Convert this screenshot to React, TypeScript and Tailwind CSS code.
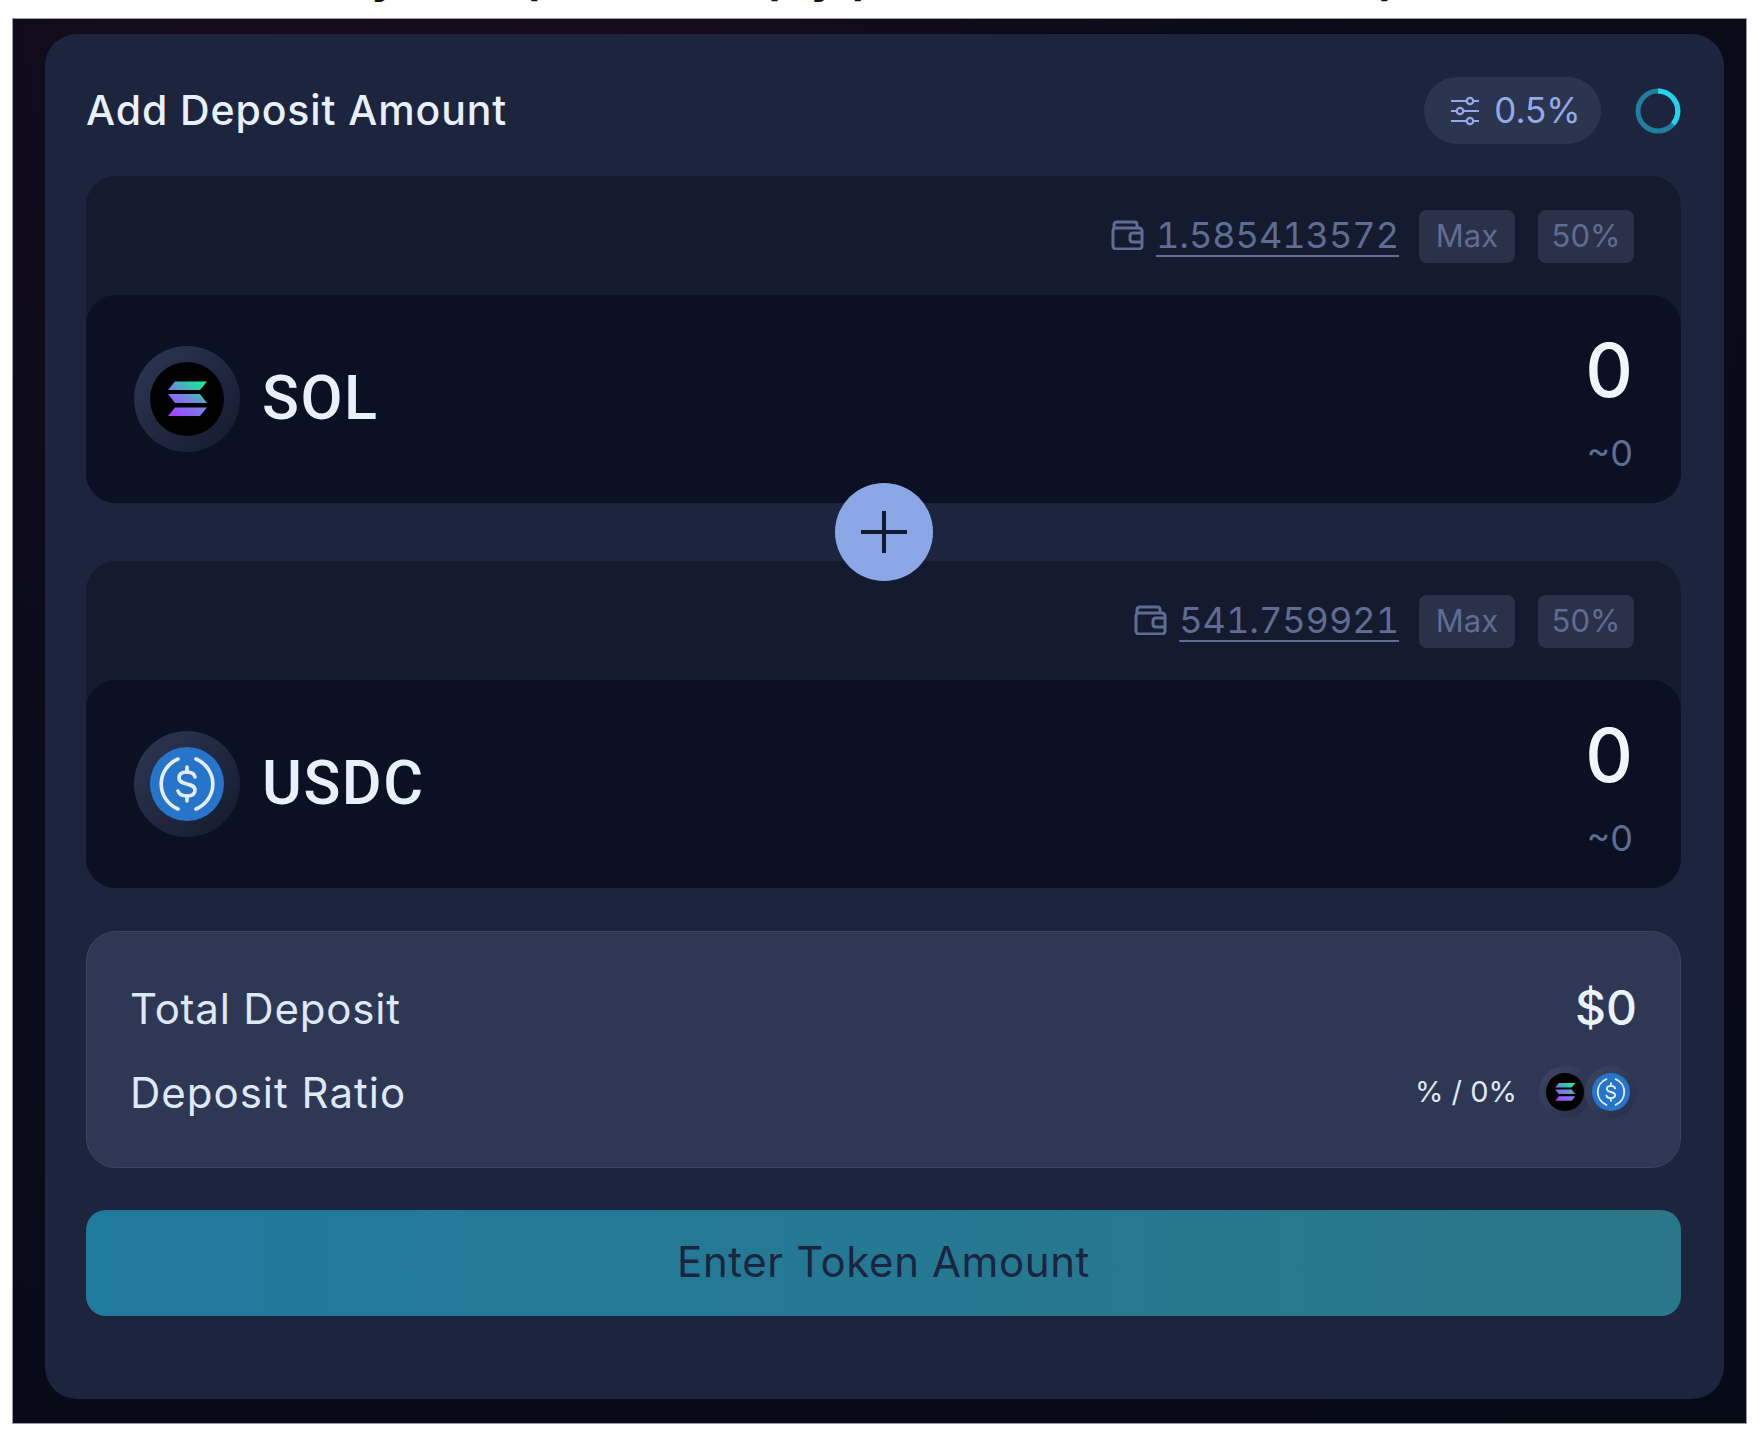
const Sol = ({ cls }: { cls: string }) => (
  <div className={`${cls} rounded-full bg-black flex items-center justify-center`}>
    <svg viewBox="0 0 74 74" className="w-full h-full">
      <defs>
        <linearGradient id="solg" x1="0.9" y1="0" x2="0.2" y2="1">
          <stop offset="0" stopColor="#14f195" />
          <stop offset="0.3" stopColor="#3fb8b8" />
          <stop offset="0.55" stopColor="#7a7fe6" />
          <stop offset="1" stopColor="#9f45ff" />
        </linearGradient>
      </defs>
      <path d="M25 19.5H57L50 28H18Z M18 32H50L57 41H25Z M25 45.5H57L50 54H18Z" fill="url(#solg)" />
    </svg>
  </div>
);

const Usdc = ({ cls }: { cls: string }) => (
  <div className={`${cls} rounded-full bg-[#2775ca] flex items-center justify-center`}>
    <svg viewBox="0 0 74 74" className="w-full h-full" fill="none" stroke="#e4eefb" strokeWidth="3.6" strokeLinecap="round">
      <path d="M28 12A27 27 0 0 0 28 62" />
      <path d="M46 12A27 27 0 0 1 46 62" />
      <path d="M45 30C44 26 41 25 37 25C32 25 29 27 29 31C29 35 33 36 37 37C41 38 45 39 45 43C45 47 42 49 37 49C32 49 29 47 28 44" strokeWidth="3.6" />
      <path d="M37 20V25M37 49V54" strokeWidth="3.6" />
    </svg>
  </div>
);

const Wallet = () => (
  <svg viewBox="0 0 33 30" className="w-[33px] h-[30px]" fill="none" stroke="#5f6c94" strokeWidth="3" strokeLinejoin="round">
    <path d="M3 9V5Q3 2 6 2H24Q26 2 26 5V8" />
    <rect x="2" y="8" width="29" height="21" rx="3" />
    <path d="M31 13H22Q19 13 19 16V19Q19 22 22 22H31" />
  </svg>
);

const Badge = ({ t }: { t: string }) => (
  <div className="w-[96px] h-[53px] rounded-[8px] bg-[#2a3149] text-[#5f6c94] text-[31px] flex items-center justify-center">{t}</div>
);

const TokenBox = ({ bal, name, icon, top }: { bal: string; name: string; icon: React.ReactNode; top: string }) => (
  <div className={`${top} rounded-[30px] bg-[#151b2f]`}>
    <div className="h-[119px] flex items-start justify-end gap-[20px] pr-[47px] pt-[34px]">
      <div className="flex items-center gap-[12px] h-[53px] pb-[4px]">
        <Wallet />
        <span className="text-[#5f6c94] text-[36px] tabular-nums underline underline-offset-[7px] decoration-[2px]">{bal}</span>
      </div>
      <div className="flex gap-[23px]">
        <Badge t="Max" />
        <Badge t="50%" />
      </div>
    </div>
    <div className="h-[208px] rounded-[30px] bg-[#0b1022] flex items-center justify-between pl-[48px] pr-[48px]">
      <div className="flex items-center gap-[22px]">
        <div className="w-[106px] h-[106px] rounded-full bg-gradient-to-br from-[#2e3754] to-[#141a2e] flex items-center justify-center">
          {icon}
        </div>
        <span className="text-[#e8f1fb] text-[61px] font-medium tracking-[1.5px] font-['Roboto',sans-serif]">{name}</span>
      </div>
      <div className="flex flex-col items-end pt-[2px]">
        <span className="text-[#f1f6fc] text-[74px] font-medium leading-[88px]">0</span>
        <span className="text-[#5f6c94] text-[36px] leading-[44px] mt-[17px]">~0</span>
      </div>
    </div>
  </div>
);

export default function App() {
  return (
    <div className="w-[1760px] h-[1436px] bg-white relative overflow-hidden font-['Inter',sans-serif]">
      <div className="absolute left-[254px] top-[-54px] text-[48px] leading-[58px] whitespace-nowrap text-[#111] font-semibold">Ready to deposit? Simply provide tokens and stop</div>
      <div className="pl-[12px] pr-[13px] pt-[18px] pb-[12px] h-full">
        <div className="h-full border border-[#9a9aa0] bg-[radial-gradient(circle_at_25%_0%,#170c1c_0%,#0a0b18_45%,#070b16_100%)] px-[32px] pt-[15px]">
          <div className="w-[1679px] h-[1365px] rounded-[32px] bg-[#1c243e] pl-[41px] pr-[43px] pt-[43px] relative">
            <div className="flex items-center justify-between h-[67px]">
              <span className="text-[#e8f0fb] text-[41px] font-medium tracking-[0.9px]">Add Deposit Amount</span>
              <div className="flex items-center gap-[34px]">
                <div className="w-[177px] h-[67px] rounded-full bg-[#2c3550] flex items-center justify-center gap-[14px] pl-[6px] text-[#93aae8] text-[35px]">
                  <svg viewBox="0 0 30 30" className="w-[30px] h-[30px]" fill="none" stroke="#93aae8" strokeWidth="2.2">
                    <path d="M1 5H17M23 5H29M1 15H7M13 15H29M1 25H17M23 25H29" />
                    <circle cx="20" cy="5" r="3.2" />
                    <circle cx="10" cy="15" r="3.2" />
                    <circle cx="20" cy="25" r="3.2" />
                  </svg>
                  <span>0.5%</span>
                </div>
                <svg viewBox="0 0 46 46" className="w-[46px] h-[46px]" fill="none" strokeWidth="5">
                  <circle cx="23" cy="23" r="20" stroke="#1f7f9c" />
                  <path d="M23 3A20 20 0 0 1 38 36" stroke="#22d3ee" />
                </svg>
              </div>
            </div>
            <TokenBox top="mt-[32px]" bal="1.585413572" name="SOL" icon={<Sol cls="w-[74px] h-[74px]" />} />
            <TokenBox top="mt-[58px]" bal="541.759921" name="USDC" icon={<Usdc cls="w-[74px] h-[74px]" />} />
            <div className="absolute left-[790px] top-[449px] w-[98px] h-[98px] rounded-full bg-[#8ba6e6] flex items-center justify-center">
              <svg viewBox="0 0 46 46" className="w-[46px] h-[46px]" stroke="#111a30" strokeWidth="4">
                <path d="M0 23H46M23 2V44" />
              </svg>
            </div>
            <div className="mt-[43px] h-[237px] rounded-[30px] bg-[#2e3754] border border-[#3a4463] pl-[43px] pr-[43px] pt-[1px] flex flex-col justify-center gap-[40px]">
              <div className="flex items-center justify-between h-[44px]">
                <span className="text-[#dfe8f5] text-[42px] tracking-[0.8px]">Total Deposit</span>
                <span className="text-[#eaf2fb] text-[48px] font-medium">$0</span>
              </div>
              <div className="flex items-center justify-between h-[44px]">
                <span className="text-[#dfe8f5] text-[42px] tracking-[1px]">Deposit Ratio</span>
                <div className="flex items-center gap-[22px]">
                  <span className="text-[#dfe8f5] text-[29px]">% / 0%</span>
                  <div className="flex">
                    <div className="w-[52px] h-[52px] rounded-full bg-gradient-to-br from-[#3c4765] to-[#262d47] flex items-center justify-center">
                      <Sol cls="w-[38px] h-[38px]" />
                    </div>
                    <div className="w-[52px] h-[52px] -ml-[6px] rounded-full bg-gradient-to-br from-[#3c4765] to-[#262d47] flex items-center justify-center">
                      <Usdc cls="w-[38px] h-[38px]" />
                    </div>
                  </div>
                </div>
              </div>
            </div>
            <div className="mt-[42px] h-[106px] pb-[3px] rounded-[20px] bg-gradient-to-r from-[#207a9d] to-[#2a7789] flex items-center justify-center text-[#1c2540] text-[42px] tracking-[0.6px]">
              Enter Token Amount
            </div>
          </div>
        </div>
      </div>
    </div>
  );
}
